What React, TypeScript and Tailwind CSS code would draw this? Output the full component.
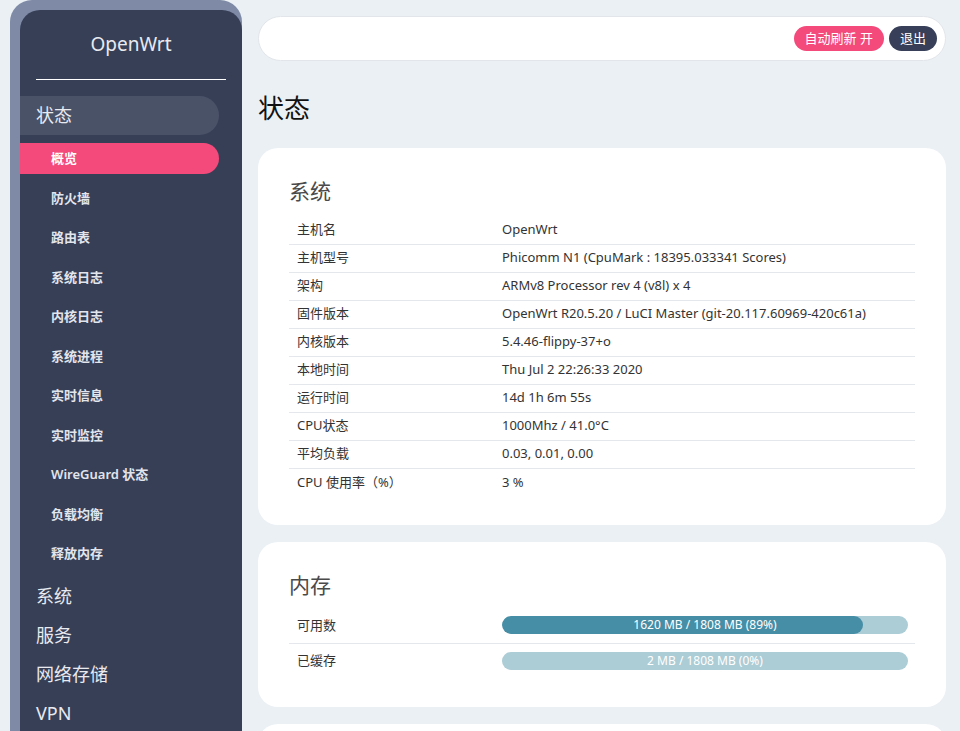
const subItems = [
  '概览',
  '防火墙',
  '路由表',
  '系统日志',
  '内核日志',
  '系统进程',
  '实时信息',
  '实时监控',
  'WireGuard 状态',
  '负载均衡',
  '释放内存',
];

const groups = ['系统', '服务', '网络存储', 'VPN'];

const systemRows: [string, string][] = [
  ['主机名', 'OpenWrt'],
  ['主机型号', 'Phicomm N1 (CpuMark : 18395.033341 Scores)'],
  ['架构', 'ARMv8 Processor rev 4 (v8l) x 4'],
  ['固件版本', 'OpenWrt R20.5.20 / LuCI Master (git-20.117.60969-420c61a)'],
  ['内核版本', '5.4.46-flippy-37+o'],
  ['本地时间', 'Thu Jul 2 22:26:33 2020'],
  ['运行时间', '14d 1h 6m 55s'],
  ['CPU状态', '1000Mhz / 41.0°C'],
  ['平均负载', '0.03, 0.01, 0.00'],
  ['CPU 使用率（%）', '3 %'],
];

const memRows = [
  { label: '可用数', used: 1620, total: 1808, pct: 89 },
  { label: '已缓存', used: 2, total: 1808, pct: 0 },
];

function Sidebar() {
  return (
    <div className="ml-[10px] w-[232px] shrink-0 rounded-t-[22px] bg-[#7f8ba6] pl-[10px] pt-[10px]">
      <div className="h-[721px] rounded-t-[20px] bg-[#373f57]">
        {/* Brand */}
        <div className="flex h-[69px] items-center justify-center text-[19px] text-[#e8eaf0]">
          OpenWrt
        </div>
        <div className="mx-4 border-t border-white" />

        {/* Active group */}
        <div className="mr-[23px] mt-[16px] flex h-[39px] items-center rounded-r-full bg-[#4a5268] pl-4 text-[18px] text-[#e8eaf0]">
          状态
        </div>
        <ul className="mt-[4px]">
          {subItems.map((item, i) => (
            <li key={item} className="flex h-[39.5px] items-center">
              <div
                className={
                  i === 0
                    ? 'mr-[23px] flex h-[31px] flex-1 items-center rounded-r-full bg-[#f34a7b] pl-[31px] text-[13px] font-semibold text-white'
                    : 'pl-[31px] text-[13px] font-semibold text-[#e2e5ec]'
                }
              >
                {item}
              </div>
            </li>
          ))}
        </ul>

        <ul className="mt-[3px]">
          {groups.map((g) => (
            <li key={g} className="flex h-[39px] items-center pl-4 text-[18px] text-[#e8eaf0]">
              {g}
            </li>
          ))}
        </ul>
      </div>
    </div>
  );
}

function Card({ title, gap, children }: { title: string; gap: string; children: React.ReactNode }) {
  return (
    <section className="rounded-[20px] bg-white px-[31px] pb-[29px] pt-[28px]">
      <h2 className="h-[30px] text-[21px] leading-[30px] text-[#4a4a4a]">{title}</h2>
      <div className={gap}>{children}</div>
    </section>
  );
}

export default function App() {
  return (
    <div
      className="flex h-[731px] overflow-hidden bg-[#ebf0f5] text-[#222]"
      style={{ fontFamily: '"Noto Sans", "Noto Sans CJK SC", sans-serif' }}
    >
      <Sidebar />

      <main className="ml-4 mr-[14px] flex-1 pt-4">
        {/* Top bar */}
        <header className="flex h-[45px] items-center justify-end gap-[5px] rounded-full border border-[#e2e6ea] bg-white pr-[8px]">
          <button className="h-[25px] rounded-full bg-[#f34a7b] px-[11px] text-[13px] text-white">
            自动刷新 开
          </button>
          <button className="h-[25px] rounded-full bg-[#384059] px-[11px] text-[13px] text-white">
            退出
          </button>
        </header>

        <h1 className="mt-[27px] h-[40px] text-[26px] leading-[40px] text-[#111]">状态</h1>

        <div className="mt-5 flex flex-col gap-[17px]">
          <Card title="系统" gap="mt-[10px]">
            <table className="w-full text-[13px] text-[#333]">
              <tbody>
                {systemRows.map(([k, v], i) => (
                  <tr key={k} className={i === 0 ? 'h-[28px]' : 'h-[28px] border-t border-[#e4e7eb]'}>
                    <td className="w-[205px] pl-2">{k}</td>
                    <td className="pl-2">{v}</td>
                  </tr>
                ))}
              </tbody>
            </table>
          </Card>

          <Card title="内存" gap="mt-[8px]">
            <table className="w-full text-[13px] text-[#333]">
              <tbody>
                {memRows.map((r, i) => (
                  <tr key={r.label} className={i === 0 ? 'h-[35px]' : 'h-[35px] border-t border-[#e4e7eb]'}>
                    <td className="w-[205px] pl-2">{r.label}</td>
                    <td className="pl-2 pr-[7px]">
                      <div className="relative h-[18px] overflow-hidden rounded-full bg-[#acccd6]">
                        <div
                          className="h-full rounded-full bg-[#468ea6]"
                          style={{ width: `${r.pct}%` }}
                        />
                        <span className="absolute inset-0 flex items-center justify-center text-[12px] text-white">
                          {r.used} MB / {r.total} MB ({r.pct}%)
                        </span>
                      </div>
                    </td>
                  </tr>
                ))}
              </tbody>
            </table>
          </Card>

          <section className="h-[100px] rounded-[20px] bg-white" />
        </div>
      </main>
    </div>
  );
}
